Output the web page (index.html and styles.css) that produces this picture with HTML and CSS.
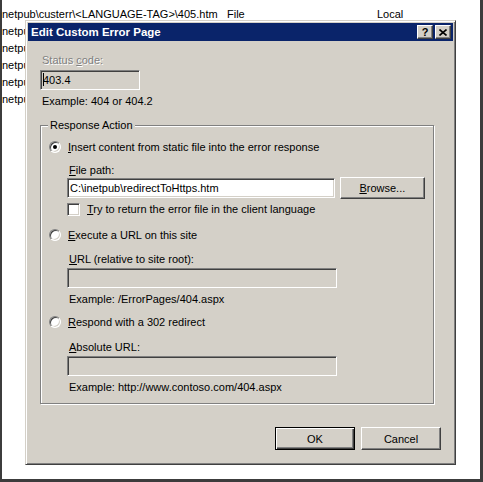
FILE: index.html
```html
<!DOCTYPE html>
<html lang="en">
<head>
  <meta charset="UTF-8" />
  <title>Edit Custom Error Page</title>
  <link rel="stylesheet" href="styles.css">
</head>
<body>

  <!-- Error pages list behind the dialog -->
  <div class="list">
    <div class="row row-cut"><span>netpub\custerr\&lt;LANGUAGE-TAG&gt;\404.htm</span><span>File</span><span>Local</span></div>
    <div class="row"><span>netpub\custerr\&lt;LANGUAGE-TAG&gt;\405.htm</span><span>File</span><span>Local</span></div>
    <div class="row"><span>netpub\custerr\&lt;LANGUAGE-TAG&gt;\406.htm</span><span>File</span><span>Local</span></div>
    <div class="row"><span>netpub\custerr\&lt;LANGUAGE-TAG&gt;\412.htm</span><span>File</span><span>Local</span></div>
    <div class="row"><span>netpub\custerr\&lt;LANGUAGE-TAG&gt;\500.htm</span><span>File</span><span>Local</span></div>
    <div class="row"><span>netpub\custerr\&lt;LANGUAGE-TAG&gt;\501.htm</span><span>File</span><span>Local</span></div>
    <div class="row"><span>netpub\custerr\&lt;LANGUAGE-TAG&gt;\502.htm</span><span>File</span><span>Local</span></div>
  </div>

  <!-- Dialog window -->
  <div class="dialog">
    <div class="titlebar">
      <span class="title">Edit Custom Error Page</span>
      <span class="cap-btn">?</span>
      <span class="cap-btn cap-close">
        <svg width="8" height="7" viewBox="0 0 8 7"><path d="M0.5 0.5 L7.5 6.5 M7.5 0.5 L0.5 6.5" stroke="#000" stroke-width="1.6" fill="none"/></svg>
      </span>
    </div>

    <div class="dialog-body">
      <div class="label disabled status-label">Status <u>c</u>ode:</div>
      <div class="field status-field"><span class="caret"></span>403.4</div>
      <div class="hint status-hint">Example: 404 or 404.2</div>

      <div class="group">
        <div class="group-title">Response Action</div>

        <div class="option opt-first"><span class="radio checked"></span><span><u>I</u>nsert content from static file into the error response</span></div>
        <div class="sub">
          <div class="label file-label"><u>F</u>ile path:</div>
          <div class="file-row">
            <div class="field white">C:\inetpub\redirectToHttps.htm</div>
            <div class="btn browse"><span><u>B</u>rowse...</span></div>
          </div>
          <div class="check-row"><span class="checkbox"></span><span><u>T</u>ry to return the error file in the client language</span></div>
        </div>

        <div class="option opt-second"><span class="radio"></span><span><u>E</u>xecute a URL on this site</span></div>
        <div class="sub">
          <div class="label sub-label"><u>U</u>RL (relative to site root):</div>
          <div class="field"></div>
          <div class="hint">Example: /ErrorPages/404.aspx</div>
        </div>

        <div class="option opt-third"><span class="radio"></span><span><u>R</u>espond with a 302 redirect</span></div>
        <div class="sub">
          <div class="label abs-label"><u>A</u>bsolute URL:</div>
          <div class="field"></div>
          <div class="hint">Example: http://www.contoso.com/404.aspx</div>
        </div>
      </div>

      <div class="actions">
        <div class="btn default">OK</div>
        <div class="btn">Cancel</div>
      </div>
    </div>
  </div>

</body>
</html>
```

FILE: styles.css
```css
html, body {
  height: 100%;
}

body {
  margin: 0;
  box-sizing: border-box;
  background: #fff;
  border-left: 2px solid #3c3c3c;
  border-right: 3px solid #3c3c3c;
  border-bottom: 3px solid #3c3c3c;
  font-family: "Liberation Sans", Arial, sans-serif;
  font-size: 11px;
  color: #000;
  overflow: hidden;
  position: relative;
}

/* List behind */
.list {
  margin-top: -11px;
}

.row {
  display: grid;
  grid-template-columns: 225px 150px auto;
  height: 17px;
  line-height: 17px;
  white-space: nowrap;
}

/* row scrolled mostly out of view */
.row-cut {
  line-height: 8px;
}

/* Dialog */
.dialog {
  position: absolute;
  left: 23px;
  top: 20px;
  width: 431px;
  height: 445px;
  box-sizing: border-box;
  background: #d4d0c8;
  border: 1px solid;
  border-color: #d4d0c8 #404040 #404040 #d4d0c8;
  box-shadow: inset 1px 1px #fff, inset -1px -1px #808080;
  padding: 2px;
}

.titlebar {
  height: 18px;
  background: #0a246a;
  display: flex;
  align-items: center;
  padding: 0 2px 0 2px;
}

.title {
  flex: 1;
  color: #fff;
  font-weight: bold;
  font-size: 11.5px;
  padding-left: 1px;
}

.cap-btn {
  width: 16px;
  height: 14px;
  box-sizing: border-box;
  background: #d4d0c8;
  border: 1px solid;
  border-color: #fff #404040 #404040 #fff;
  box-shadow: inset -1px -1px #808080;
  display: flex;
  align-items: center;
  justify-content: center;
  font-weight: bold;
  font-size: 11px;
  line-height: 12px;
}

.cap-close {
  margin-left: 2px;
}

.dialog-body {
  padding: 0 12px;
}

.label,
.hint {
  line-height: 14px;
  padding-left: 2px;
  white-space: nowrap;
}

.disabled {
  color: #808080;
  text-shadow: 1px 1px #fff;
}

.status-label {
  margin-top: 12px;
}

.field {
  width: 270px;
  height: 20px;
  box-sizing: border-box;
  border: 1px solid;
  border-color: #808080 #fff #fff #808080;
  box-shadow: inset 1px 1px #404040, inset -1px -1px #d4d0c8;
  background: #d4d0c8;
  padding-left: 2px;
  line-height: 18px;
  white-space: nowrap;
}

.field.white {
  background: #fff;
}

.status-field {
  width: 100px;
  margin-top: 3px;
}

.caret {
  display: inline-block;
  width: 1px;
  height: 13px;
  background: #000;
  vertical-align: -2px;
  margin-right: -1px;
}

.hint {
  margin-top: 4px;
}

/* Response Action group */
.group {
  width: 394px;
  box-sizing: border-box;
  margin-top: 17px;
  border: 1px solid #808080;
  box-shadow: inset 1px 1px #fff, 1px 1px #fff;
  padding: 0 8px 9px 8px;
}

.group-title {
  width: fit-content;
  margin: -8px 0 0 -1px;
  padding: 0 2px;
  background: #d4d0c8;
  line-height: 14px;
}

.option {
  display: flex;
  align-items: center;
  gap: 7px;
  height: 14px;
  white-space: nowrap;
}

.opt-first { margin-top: 8px; }
.opt-second { margin-top: 12px; }
.opt-third { margin-top: 9px; }

.radio {
  width: 12px;
  height: 12px;
  box-sizing: border-box;
  border-radius: 50%;
  border: 1px solid;
  border-color: #808080 #fff #fff #808080;
  box-shadow: inset 1px 1px #404040, inset -1px -1px #d4d0c8;
  background: #fff;
  display: flex;
  align-items: center;
  justify-content: center;
}

.radio.checked::after {
  content: "";
  width: 4px;
  height: 4px;
  border-radius: 50%;
  background: #000;
}

.sub {
  margin-left: 18px;
}

.file-label { margin-top: 9px; }
.sub-label { margin-top: 10px; }
.abs-label { margin-top: 11px; }

.sub .field {
  margin-top: 2px;
}

.file-row {
  display: flex;
  align-items: center;
  gap: 5px;
  height: 22px;
}

.file-row .field {
  margin-top: 0;
}

.check-row {
  display: flex;
  align-items: center;
  gap: 7px;
  height: 14px;
  margin-top: 3px;
  white-space: nowrap;
}

.checkbox {
  width: 13px;
  height: 13px;
  box-sizing: border-box;
  border: 1px solid;
  border-color: #808080 #fff #fff #808080;
  box-shadow: inset 1px 1px #404040, inset -1px -1px #d4d0c8;
  background: #fff;
}

/* Buttons */
.btn {
  width: 80px;
  height: 23px;
  box-sizing: border-box;
  border: 1px solid;
  border-color: #fff #404040 #404040 #fff;
  box-shadow: inset -1px -1px #808080;
  display: flex;
  align-items: center;
  justify-content: center;
  background: #d4d0c8;
}

.btn.browse {
  width: 86px;
  height: 22px;
}

.btn.default {
  border: 1px solid #000;
  box-shadow: inset 1px 1px #fff, inset -1px -1px #404040, inset -2px -2px #808080;
}

.actions {
  display: flex;
  justify-content: flex-end;
  gap: 6px;
  margin-top: 23px;
}
```
